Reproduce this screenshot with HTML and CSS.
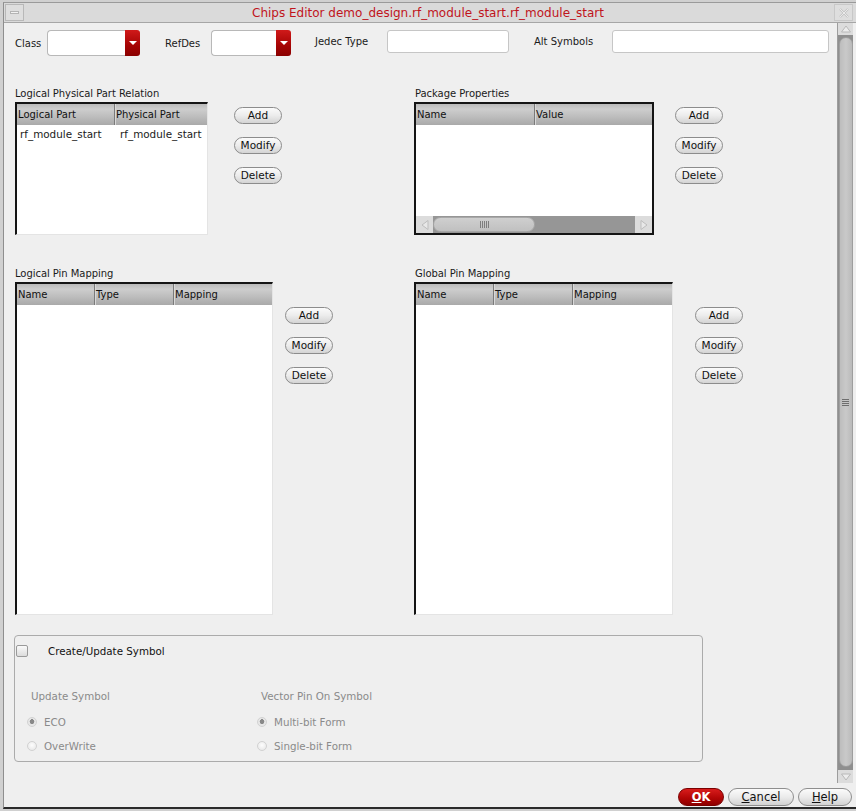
FILE: index.html
```html
<!DOCTYPE html>
<html>
<head>
<meta charset="utf-8">
<link rel="stylesheet" href="styles.css">
</head>
<body>
<div class="screen">
  <div class="win">
    <div class="titlebar">
      <div class="tb-btn tb-min"><span class="dash"></span></div>
      <div class="title">Chips Editor demo_design.rf_module_start.rf_module_start</div>
      <div class="tb-btn tb-close">
        <svg width="12" height="12" viewBox="0 0 12 12"><path d="M2 2 L10 10 M10 2 L2 10" stroke="#c4c4c4" stroke-width="2.2" fill="none"/><path d="M2 2 L10 10 M10 2 L2 10" stroke="#f4f4f4" stroke-width="0.8" fill="none"/></svg>
      </div>
    </div>
    <div class="main">
      <div class="content">
        <div class="toprow">
          <span class="lbl l-class">Class</span>
          <div class="combo c-class"><div class="combo-field"></div><div class="combo-btn"><span class="tri"></span></div></div>
          <span class="lbl l-refdes">RefDes</span>
          <div class="combo c-refdes"><div class="combo-field"></div><div class="combo-btn"><span class="tri"></span></div></div>
          <span class="lbl l-jedec">Jedec Type</span>
          <div class="field f-jedec"></div>
          <span class="lbl l-alt">Alt Symbols</span>
          <div class="field f-alt"></div>
        </div>

        <div class="sections">
          <div class="section">
            <div class="sec-label">Logical Physical Part Relation</div>
            <div class="sec-body">
              <div class="table t-lppr">
                <div class="thead">
                  <div class="th" style="width:98px">Logical Part</div>
                  <div class="th last">Physical Part</div>
                </div>
                <div class="trow">
                  <div class="td" style="width:100px">rf_module_start</div>
                  <div class="td">rf_module_start</div>
                </div>
              </div>
              <div class="btns b-lppr">
                <div class="btn">Add</div>
                <div class="btn">Modify</div>
                <div class="btn">Delete</div>
              </div>
            </div>
          </div>

          <div class="section">
            <div class="sec-label">Package Properties</div>
            <div class="sec-body">
              <div class="table t-pkg">
                <div class="thead">
                  <div class="th" style="width:119px">Name</div>
                  <div class="th last">Value</div>
                </div>
                <div class="tbody-fill"></div>
                <div class="hscroll">
                  <div class="hs-arrow"><svg width="10" height="12" viewBox="0 0 10 12"><path d="M8 1.5 L2 6 L8 10.5 Z" fill="#e8e8e8" stroke="#bdbdbd" stroke-width="1"/></svg></div>
                  <div class="hs-track">
                    <div class="hs-thumb"><span class="grip-v"></span></div>
                  </div>
                  <div class="hs-arrow"><svg width="10" height="12" viewBox="0 0 10 12"><path d="M2 1.5 L8 6 L2 10.5 Z" fill="#e8e8e8" stroke="#bdbdbd" stroke-width="1"/></svg></div>
                </div>
              </div>
              <div class="btns b-pkg">
                <div class="btn">Add</div>
                <div class="btn">Modify</div>
                <div class="btn">Delete</div>
              </div>
            </div>
          </div>

          <div class="section">
            <div class="sec-label">Logical Pin Mapping</div>
            <div class="sec-body">
              <div class="table t-pin">
                <div class="thead">
                  <div class="th" style="width:78px">Name</div>
                  <div class="th" style="width:79px">Type</div>
                  <div class="th last">Mapping</div>
                </div>
              </div>
              <div class="btns b-pin">
                <div class="btn">Add</div>
                <div class="btn">Modify</div>
                <div class="btn">Delete</div>
              </div>
            </div>
          </div>

          <div class="section">
            <div class="sec-label">Global Pin Mapping</div>
            <div class="sec-body">
              <div class="table t-glob">
                <div class="thead">
                  <div class="th" style="width:78px">Name</div>
                  <div class="th" style="width:79px">Type</div>
                  <div class="th last">Mapping</div>
                </div>
              </div>
              <div class="btns b-glob">
                <div class="btn">Add</div>
                <div class="btn">Modify</div>
                <div class="btn">Delete</div>
              </div>
            </div>
          </div>
        </div>

        <div class="group">
          <div class="chk-row">
            <span class="checkbox"></span>
            <span class="chk-label">Create/Update Symbol</span>
          </div>
          <div class="opts">
            <div class="optcol oc1">
              <div class="opt-title">Update Symbol</div>
              <div class="radio-row"><span class="radio on"></span><span>ECO</span></div>
              <div class="radio-row"><span class="radio"></span><span>OverWrite</span></div>
            </div>
            <div class="optcol oc2">
              <div class="opt-title">Vector Pin On Symbol</div>
              <div class="radio-row"><span class="radio on"></span><span>Multi-bit Form</span></div>
              <div class="radio-row"><span class="radio"></span><span>Single-bit Form</span></div>
            </div>
          </div>
        </div>
      </div>

      <div class="vscroll">
        <div class="vs-arrow up"><svg width="12" height="10" viewBox="0 0 12 10"><path d="M1.5 8 L6 2 L10.5 8 Z" fill="#ececec" stroke="#b8b8b8" stroke-width="1"/></svg></div>
        <div class="vs-track">
          <div class="vs-thumb"><span class="grip-h"></span></div>
        </div>
        <div class="vs-arrow down"><svg width="12" height="10" viewBox="0 0 12 10"><path d="M1.5 2 L6 8 L10.5 2 Z" fill="#ececec" stroke="#b8b8b8" stroke-width="1"/></svg></div>
      </div>
    </div>
    <div class="footer">
      <div class="fbtn ok"><u>O</u>K</div>
      <div class="fbtn cancel"><u>C</u>ancel</div>
      <div class="fbtn help"><u>H</u>elp</div>
    </div>
  </div>
</div>
</body>
</html>
```

FILE: styles.css
```css
html, body {
  margin: 0;
  padding: 0;
}
body {
  font-family: "DejaVu Sans", "Liberation Sans", sans-serif;
  font-size: 10px;
  color: #1a1a1a;
  background: #d6d6d6;
}
.screen {
  width: 856px;
  height: 811px;
  overflow: hidden;
  background: #d0d0d0;
}
.win {
  margin: 2px 0 0 3px;
  width: 853px;
  height: 807px;
  box-sizing: border-box;
  border-left: 1px solid #8e8e8e;
  border-top: 1px solid #9a9a9a;
  border-bottom: 2px solid #2a2a2a;
  background: #efefef;
  display: flex;
  flex-direction: column;
}
.titlebar {
  height: 19px;
  flex: none;
  display: flex;
  align-items: center;
  background: #dadada;
  border-bottom: 1px solid #a6a6a6;
}
.tb-btn {
  width: 19px;
  height: 17px;
  box-sizing: border-box;
  border: 1px solid #b8b8b8;
  background: #dedede;
  display: flex;
  align-items: center;
  justify-content: center;
  flex: none;
}
.tb-min { margin-left: 1px; }
.tb-min .dash {
  width: 9px;
  height: 3px;
  box-sizing: border-box;
  border: 1px solid #b4b4b4;
  background: #f2f2f2;
}
.tb-close { margin-right: 3px; border-color: #c8c8c8; }
.title {
  flex: 1;
  text-align: center;
  color: #c0141c;
  font-size: 12px;
  padding-right: 2px;
}
.main {
  flex: 1;
  display: flex;
  min-height: 0;
}
.content {
  flex: 1;
  padding: 7px 0 0 11px;
  box-sizing: border-box;
}
.toprow {
  display: flex;
  align-items: center;
  height: 26px;
}
.lbl { flex: none; }
.l-class { width: 32px; }
.l-refdes { width: 46px; margin-left: 25px; }
.l-jedec { width: 72px; margin-left: 24px; margin-top: -3px; }
.l-alt { width: 78px; margin-left: 25px; margin-top: -3px; }
.combo {
  display: flex;
  height: 26px;
  flex: none;
}
.c-class { width: 93px; }
.c-refdes { width: 80px; }
.combo-field {
  flex: 1;
  box-sizing: border-box;
  border: 1px solid #b8b8b8;
  border-right: none;
  border-radius: 4px 0 0 4px;
  background: #fff;
}
.combo-btn {
  width: 15px;
  background: linear-gradient(#d01a1a, #a50404 60%, #8a0000);
  border-radius: 0 3px 3px 0;
  display: flex;
  align-items: center;
  justify-content: center;
}
.tri {
  width: 0;
  height: 0;
  border-left: 4px solid transparent;
  border-right: 4px solid transparent;
  border-top: 4px solid #fff;
}
.field {
  height: 23px;
  box-sizing: border-box;
  border: 1px solid #c6c6c6;
  border-radius: 3px;
  background: #fff;
  flex: none;
  margin-top: -3px;
}
.f-jedec { width: 122px; }
.f-alt { width: 217px; }

.sections {
  margin-top: 32px;
  display: grid;
  grid-template-columns: 399px 1fr;
  row-gap: 33px;
}
.sec-label {
  height: 12px;
  line-height: 12px;
  margin-bottom: 2px;
  white-space: nowrap;
  letter-spacing: -0.05px;
}
.section:nth-child(2n) .sec-label { padding-left: 1px; }
.sec-body {
  display: flex;
  align-items: flex-start;
}
.table {
  box-sizing: border-box;
  background: #fff;
  border-left: 2px solid #141414;
  border-top: 2px solid #141414;
  border-right: 1px solid #e4e4e4;
  border-bottom: 1px solid #e4e4e4;
  display: flex;
  flex-direction: column;
  overflow: hidden;
}
.t-lppr { width: 193px; height: 133px; }
.t-pkg { width: 240px; height: 133px; border-right: 2px solid #141414; border-bottom: 2px solid #141414; }
.t-pin { width: 258px; height: 333px; }
.t-glob { width: 259px; height: 333px; }
.thead {
  display: flex;
  height: 21px;
  flex: none;
  background: linear-gradient(#bababa, #cdcdcd 25%, #bdbdbd 60%, #a9a9a9);
}
.th {
  box-sizing: border-box;
  height: 21px;
  line-height: 22px;
  padding-left: 1px;
  border-right: 1px solid #7a7a7a;
  box-shadow: 1px 0 0 #d8d8d8;
  white-space: nowrap;
  color: #111;
  flex: none;
}
.th.last { border-right: none; box-shadow: none; flex: 1; }
.trow {
  display: flex;
  height: 18px;
  line-height: 18px;
}
.td {
  padding-left: 3px;
  box-sizing: border-box;
  white-space: nowrap;
  font-size: 10.4px;
  flex: none;
}
.tbody-fill { flex: 1; }
.hscroll {
  height: 17px;
  flex: none;
  display: flex;
  background: #969696;
}
.hs-arrow {
  width: 17px;
  background: #dcdcdc;
  display: flex;
  align-items: center;
  justify-content: center;
}
.hs-track {
  flex: 1;
  display: flex;
  align-items: center;
}
.hs-thumb {
  width: 102px;
  height: 15px;
  border-radius: 8px;
  background: linear-gradient(#cfcfcf, #c0c0c0);
  border: 1px solid #a8a8a8;
  box-sizing: border-box;
  display: flex;
  align-items: center;
  justify-content: center;
}
.grip-v {
  width: 9px;
  height: 7px;
  background: repeating-linear-gradient(90deg, #7e7e7e 0 1px, transparent 1px 2px);
}
.btns {
  display: flex;
  flex-direction: column;
  gap: 13px;
}
.b-lppr { margin-left: 26px; margin-top: 5px; }
.b-pkg { margin-left: 21px; margin-top: 5px; }
.b-pin { margin-left: 12px; margin-top: 25px; }
.b-glob { margin-left: 22px; margin-top: 25px; }
.btn {
  width: 48px;
  height: 17px;
  box-sizing: border-box;
  border: 1px solid #8c8c8c;
  border-radius: 9px;
  background: linear-gradient(#fbfbfb, #ececec 50%, #d4d4d4);
  text-align: center;
  line-height: 15px;
  font-size: 10.5px;
  color: #111;
}

.group {
  margin: 20px 0 0 -1px;
  width: 689px;
  height: 127px;
  box-sizing: border-box;
  border: 1px solid #ababab;
  border-radius: 4px;
  padding: 8px 0 0 1px;
}
.chk-row {
  display: flex;
  align-items: center;
  height: 14px;
}
.checkbox {
  width: 12px;
  height: 12px;
  box-sizing: border-box;
  border: 1px solid #9a9a9a;
  border-radius: 2px;
  background: linear-gradient(#fafafa, #dcdcdc);
}
.chk-label { margin-left: 20px; color: #111; font-size: 10.3px; }
.opts {
  display: flex;
  margin-top: 32px;
}
.optcol { color: #8a8a8a; }
.oc1 { width: 230px; padding-left: 15px; }
.oc2 { padding-left: 0; }
.opt-title { height: 13px; line-height: 13px; margin-bottom: 7px; font-size: 10.3px; }
.radio-row {
  display: flex;
  align-items: center;
  height: 24px;
  margin-left: -4px;
}
.radio-row span:last-child { margin-left: 7px; font-size: 10.3px; }
.radio {
  width: 10px;
  height: 10px;
  border-radius: 50%;
  box-sizing: border-box;
  border: 1px solid #d2d2d2;
  background: radial-gradient(circle at 50% 40%, #fdfdfd, #e4e4e4);
  flex: none;
}
.radio.on {
  background: radial-gradient(circle at 50% 45%, #888 0 2.2px, #e6e6e6 2.6px);
}

.vscroll {
  width: 16px;
  flex: none;
  margin-right: 3px;
  display: flex;
  flex-direction: column;
  background: #8f8f8f;
  border-left: 1px solid #9d9d9d;
  box-sizing: border-box;
}
.vs-arrow {
  height: 12px;
  flex: none;
  background: #dcdcdc;
  display: flex;
  align-items: center;
  justify-content: center;
}
.vs-arrow.down { height: 13px; }
.vs-track {
  flex: 1;
  display: flex;
  justify-content: center;
  padding: 2px 0 3px;
}
.vs-thumb {
  width: 14px;
  box-sizing: border-box;
  border: 1px solid #9e9e9e;
  border-radius: 7px;
  background: linear-gradient(90deg, #bdbdbd, #c9c9c9 50%, #bababa);
  display: flex;
  align-items: center;
  justify-content: center;
}
.grip-h {
  width: 7px;
  height: 7px;
  background: repeating-linear-gradient(180deg, #6e6e6e 0 1px, transparent 1px 2px);
}
.footer {
  height: 24px;
  flex: none;
  display: flex;
  justify-content: flex-end;
  align-items: flex-start;
  padding: 5px 4px 0 0;
  gap: 4px;
  box-sizing: border-box;
}
.fbtn {
  height: 18px;
  box-sizing: border-box;
  border: 1px solid #8e8e8e;
  border-radius: 9px;
  background: linear-gradient(#fbfbfb, #ebebeb 50%, #d2d2d2);
  text-align: center;
  line-height: 16px;
  font-size: 11.5px;
  color: #111;
}
.fbtn u { text-decoration-thickness: 1px; text-underline-offset: 1px; }
.ok {
  width: 46px;
  background: linear-gradient(#d81c1c, #b40606 55%, #8e0000);
  border-color: #7a0000;
  color: #fff;
  font-weight: bold;
}
.cancel { width: 66px; }
.help { width: 54px; }
```
